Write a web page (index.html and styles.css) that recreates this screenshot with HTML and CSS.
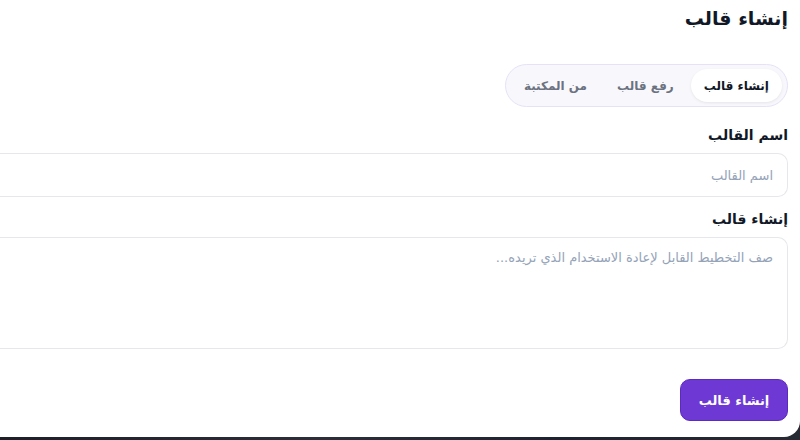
FILE: index.html
```html
<!DOCTYPE html>
<html lang="ar" dir="rtl">
<head>
    <meta charset="UTF-8">
    <meta name="viewport" content="width=device-width, initial-scale=1.0">
    <title>إنشاء قالب</title>
    <link rel="stylesheet" href="styles.css">
</head>
<body>
    <div class="modal">
        <h2 class="modal-title">إنشاء قالب</h2>

        <div class="tabs">
            <button class="tab active">إنشاء قالب</button>
            <button class="tab">رفع قالب</button>
            <button class="tab">من المكتبة</button>
        </div>

        <label class="field-label" for="name">اسم القالب</label>
        <input class="field-input" id="name" type="text" placeholder="اسم القالب">

        <label class="field-label" for="desc">إنشاء قالب</label>
        <textarea class="field-area" id="desc" placeholder="صف التخطيط القابل لإعادة الاستخدام الذي تريده..."></textarea>

        <div class="actions">
            <button class="submit">إنشاء قالب</button>
        </div>
    </div>
</body>
</html>
```

FILE: styles.css
```css
body {
    margin: 0;
    padding: 0;
    direction: rtl;
    font-family: "DejaVu Sans", sans-serif;
    background: linear-gradient(90deg, #1b2029, #2a2f3a 40%, #1d2431 70%, #262a33);
    overflow: hidden;
    height: 440px;
}
/* the dialog is wider than the window, only its right part shows */
.modal {
    width: 800px;
    height: 437px;
    box-sizing: border-box;
    background: #fff;
    border-radius: 0 0 16px 0;
    padding: 3px 12px 0 0;
    display: flex;
    flex-direction: column;
    align-items: flex-start;
}
.modal-title {
    margin: 0;
    font-size: 19px;
    line-height: 30px;
    font-weight: bold;
    color: #111827;
}
.tabs {
    margin-top: 31px;
    display: flex;
    gap: 4px;
    padding: 4px 5px;
    background: #f8f8fc;
    border: 1px solid #e6e1f7;
    border-radius: 22px;
}
.tab {
    font-family: inherit;
    font-size: 12px;
    font-weight: bold;
    color: #6b7280;
    background: transparent;
    border: none;
    height: 33px;
    padding: 0 13px;
    border-radius: 17px;
    cursor: pointer;
}
.tab.active {
    background: #fff;
    color: #111827;
    box-shadow: 0 1px 3px rgba(0, 0, 0, 0.08);
}
.field-label {
    margin-top: 18px;
    font-size: 14px;
    font-weight: bold;
    color: #111827;
    line-height: 20px;
}
.field-input + .field-label {
    margin-top: 12px;
}
.field-input,
.field-area {
    font-family: inherit;
    width: 100%;
    box-sizing: border-box;
    margin-top: 8px;
    border: 1px solid #e5e7eb;
    border-left: none;
    border-radius: 0 10px 10px 0;
    padding: 0 14px;
    font-size: 13px;
    color: #111827;
    outline: none;
}
.field-input {
    height: 44px;
}
.field-area {
    height: 112px;
    padding-top: 12px;
    resize: none;
}
.field-input::placeholder,
.field-area::placeholder {
    color: #94a3b8;
}
.actions {
    margin-top: 30px;
}
.submit {
    font-family: inherit;
    font-size: 13px;
    font-weight: bold;
    color: #fff;
    background: #6d38d4;
    border: 1px solid #5b2bbd;
    border-radius: 10px;
    height: 42px;
    width: 108px;
    cursor: pointer;
}
```
